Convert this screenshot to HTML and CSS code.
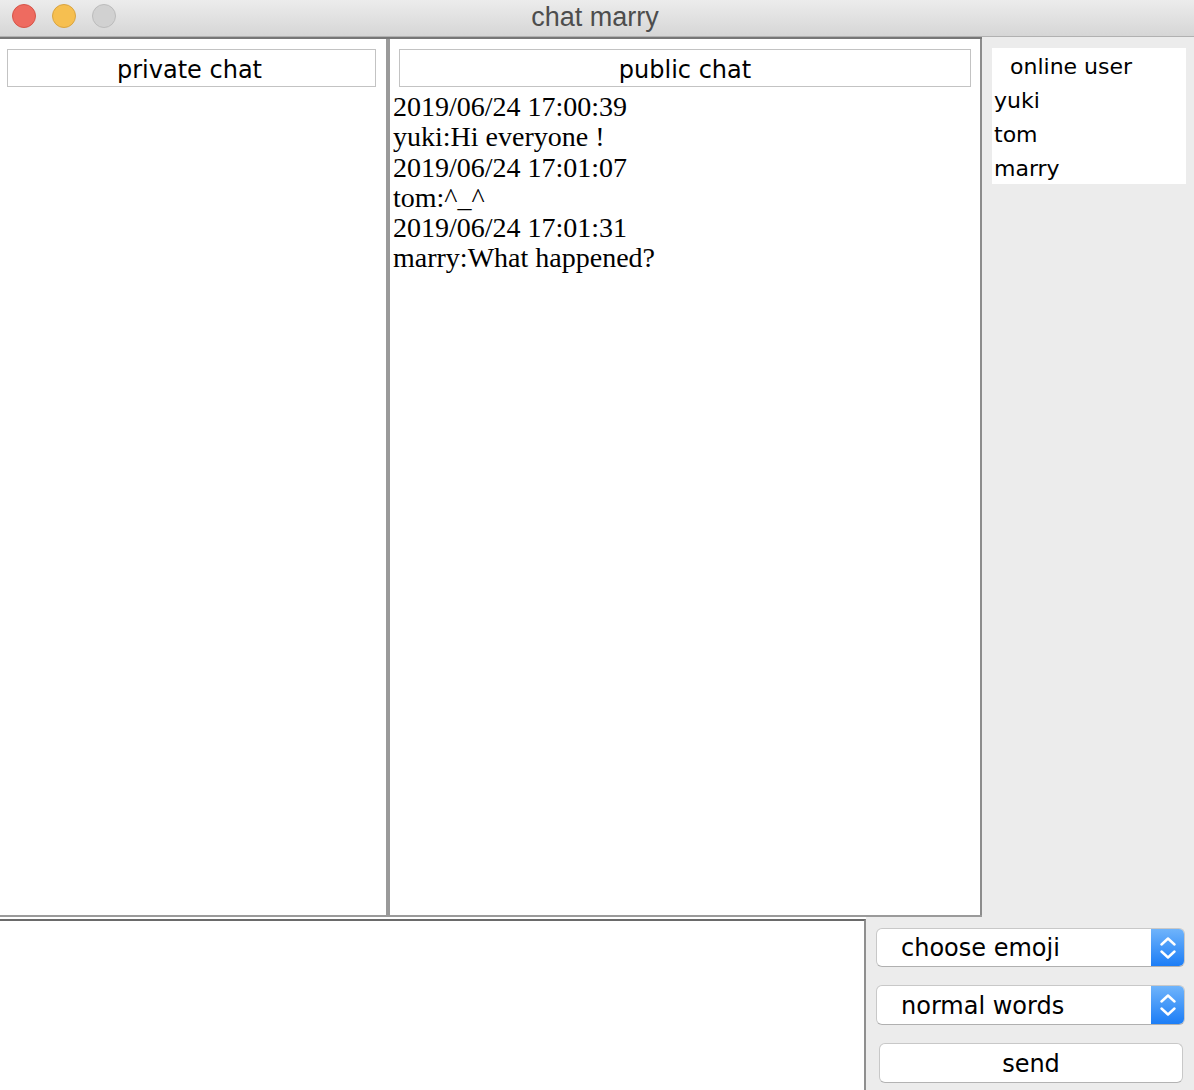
FILE: index.html
```html
<!DOCTYPE html>
<html>
<head>
<meta charset="utf-8">
<title>chat marry</title>
<link rel="stylesheet" href="styles.css">
</head>
<body>
<div class="window">
  <div class="titlebar">
    <div class="lights">
      <span class="light red"></span>
      <span class="light yellow"></span>
      <span class="light gray"></span>
    </div>
    <div class="title">chat marry</div>
    <div></div>
  </div>
  <div class="main">
    <div class="split">
      <div class="pane left-pane">
        <div class="pane-head">private chat</div>
      </div>
      <div class="divider"></div>
      <div class="pane center-pane">
        <div class="pane-head center-head">public chat</div>
        <div class="messages">
          <div>2019/06/24 17:00:39</div>
          <div>yuki:Hi everyone !</div>
          <div>2019/06/24 17:01:07</div>
          <div>tom:^_^</div>
          <div>2019/06/24 17:01:31</div>
          <div>marry:What happened?</div>
        </div>
      </div>
    </div>
    <div class="side">
      <ul class="users">
        <li class="users-head">online user</li>
        <li>yuki</li>
        <li>tom</li>
        <li>marry</li>
      </ul>
    </div>
  </div>
  <div class="bottom">
    <div class="input-wrap"><div class="input"></div></div>
    <div class="controls">
      <div class="combo">
        <span class="combo-label">choose emoji</span>
        <span class="combo-arrow"><svg width="16" height="24" viewBox="0 0 16 24"><path d="M1.5 8.5 L8 2.5 L14.5 8.5" fill="none" stroke="#fff" stroke-width="2.4" stroke-linecap="round" stroke-linejoin="round"/><path d="M1.5 15.5 L8 21.5 L14.5 15.5" fill="none" stroke="#fff" stroke-width="2.4" stroke-linecap="round" stroke-linejoin="round"/></svg></span>
      </div>
      <div class="combo">
        <span class="combo-label">normal words</span>
        <span class="combo-arrow"><svg width="16" height="24" viewBox="0 0 16 24"><path d="M1.5 8.5 L8 2.5 L14.5 8.5" fill="none" stroke="#fff" stroke-width="2.4" stroke-linecap="round" stroke-linejoin="round"/><path d="M1.5 15.5 L8 21.5 L14.5 15.5" fill="none" stroke="#fff" stroke-width="2.4" stroke-linecap="round" stroke-linejoin="round"/></svg></span>
      </div>
      <div class="button">send</div>
    </div>
  </div>
</div>
</body>
</html>
```

FILE: styles.css
```css
html, body {
  margin: 0;
  padding: 0;
}
body {
  width: 1194px;
  height: 1090px;
  overflow: hidden;
  background: #ececec;
  font-family: "DejaVu Sans", "Noto Sans", sans-serif;
  color: #000;
}
.window {
  display: flex;
  flex-direction: column;
  height: 1090px;
}
.titlebar {
  height: 36px;
  border-bottom: 1px solid #b1b1b1;
  background: linear-gradient(#ececec, #d6d6d6);
  display: grid;
  grid-template-columns: 1fr auto 1fr;
  align-items: center;
}
.lights {
  display: flex;
  gap: 16px;
  padding-left: 12px;
  margin-top: -4px;
}
.light {
  width: 22px;
  height: 22px;
  border-radius: 50%;
  border: 1px solid transparent;
}
.light.red { background: #ee6b60; border-color: #d65448; }
.light.yellow { background: #f6bf50; border-color: #d9a441; }
.light.gray { background: #d1d1d1; border-color: #bcbcbc; }
.title {
  font-family: "Liberation Sans", Arial, sans-serif;
  font-size: 27px;
  color: #4d4d4d;
  margin-top: -2px;
  padding-right: 4px;
}
.main {
  display: flex;
  height: 880px;
}
.split {
  width: 982px;
  box-sizing: border-box;
  border-top: 2px solid #777;
  border-bottom: 2px solid #9a9a9a;
  display: flex;
  background: #fff;
}
.pane {
  background: #fff;
}
.left-pane {
  width: 386px;
  padding: 10px 10px 0 7px;
  box-sizing: border-box;
}
.divider {
  width: 4px;
  background: #9a9a9a;
}
.center-pane {
  flex: 1;
  border-right: 2px solid #8c8c8c;
  padding: 10px 9px 0 0;
}
.pane-head {
  height: 38px;
  box-sizing: border-box;
  border: 1px solid #c3c3c3;
  display: flex;
  align-items: center;
  justify-content: center;
  font-size: 24px;
  padding-top: 3px;
}
.left-pane .pane-head {
  padding-right: 4px;
}
.center-head {
  margin-left: 9px;
}
.messages {
  margin-top: 5px;
  padding-left: 3px;
  font-family: "Liberation Serif", "Times New Roman", serif;
  font-size: 28px;
  line-height: 30.3px;
}
.side {
  flex: 1;
  background: #ececec;
  padding: 11px 8px 0 10px;
}
.users {
  list-style: none;
  margin: 0;
  padding: 2px 0 0 2px;
  height: 136px;
  box-sizing: border-box;
  background: #fff;
  font-size: 22px;
  line-height: 34px;
}
.users-head {
  padding-left: 16px;
}
.bottom {
  flex: 1;
  display: flex;
}
.input-wrap {
  width: 866px;
  background: #fff;
  padding-top: 2px;
  display: flex;
}
.input {
  flex: 1;
  border-top: 2px solid #6a6a6a;
  border-right: 2px solid #8f8f8f;
  background: #fff;
}
.controls {
  flex: 1;
  padding: 11px 9px 0 10px;
  display: flex;
  flex-direction: column;
  gap: 18px;
}
.combo {
  height: 39px;
  box-sizing: border-box;
  display: flex;
  background: #fff;
  border: 1px solid #c8c8c8;
  border-bottom-color: #b0b0b0;
  border-radius: 6px;
  overflow: hidden;
  font-size: 24px;
}
.combo + .combo {
  height: 40px;
}
.combo-label {
  flex: 1;
  padding-left: 24px;
  display: flex;
  align-items: center;
  padding-top: 1px;
}
.combo-arrow {
  width: 33px;
  background: linear-gradient(#6fb4fb, #1c7df6);
  display: flex;
  align-items: center;
  justify-content: center;
}
.button {
  margin: 0 2px 0 3px;
  height: 40px;
  box-sizing: border-box;
  background: #fff;
  border: 1px solid #c8c8c8;
  border-bottom-color: #b3b3b3;
  border-radius: 6px;
  display: flex;
  align-items: center;
  justify-content: center;
  font-size: 24px;
  padding-top: 1px;
}
```
